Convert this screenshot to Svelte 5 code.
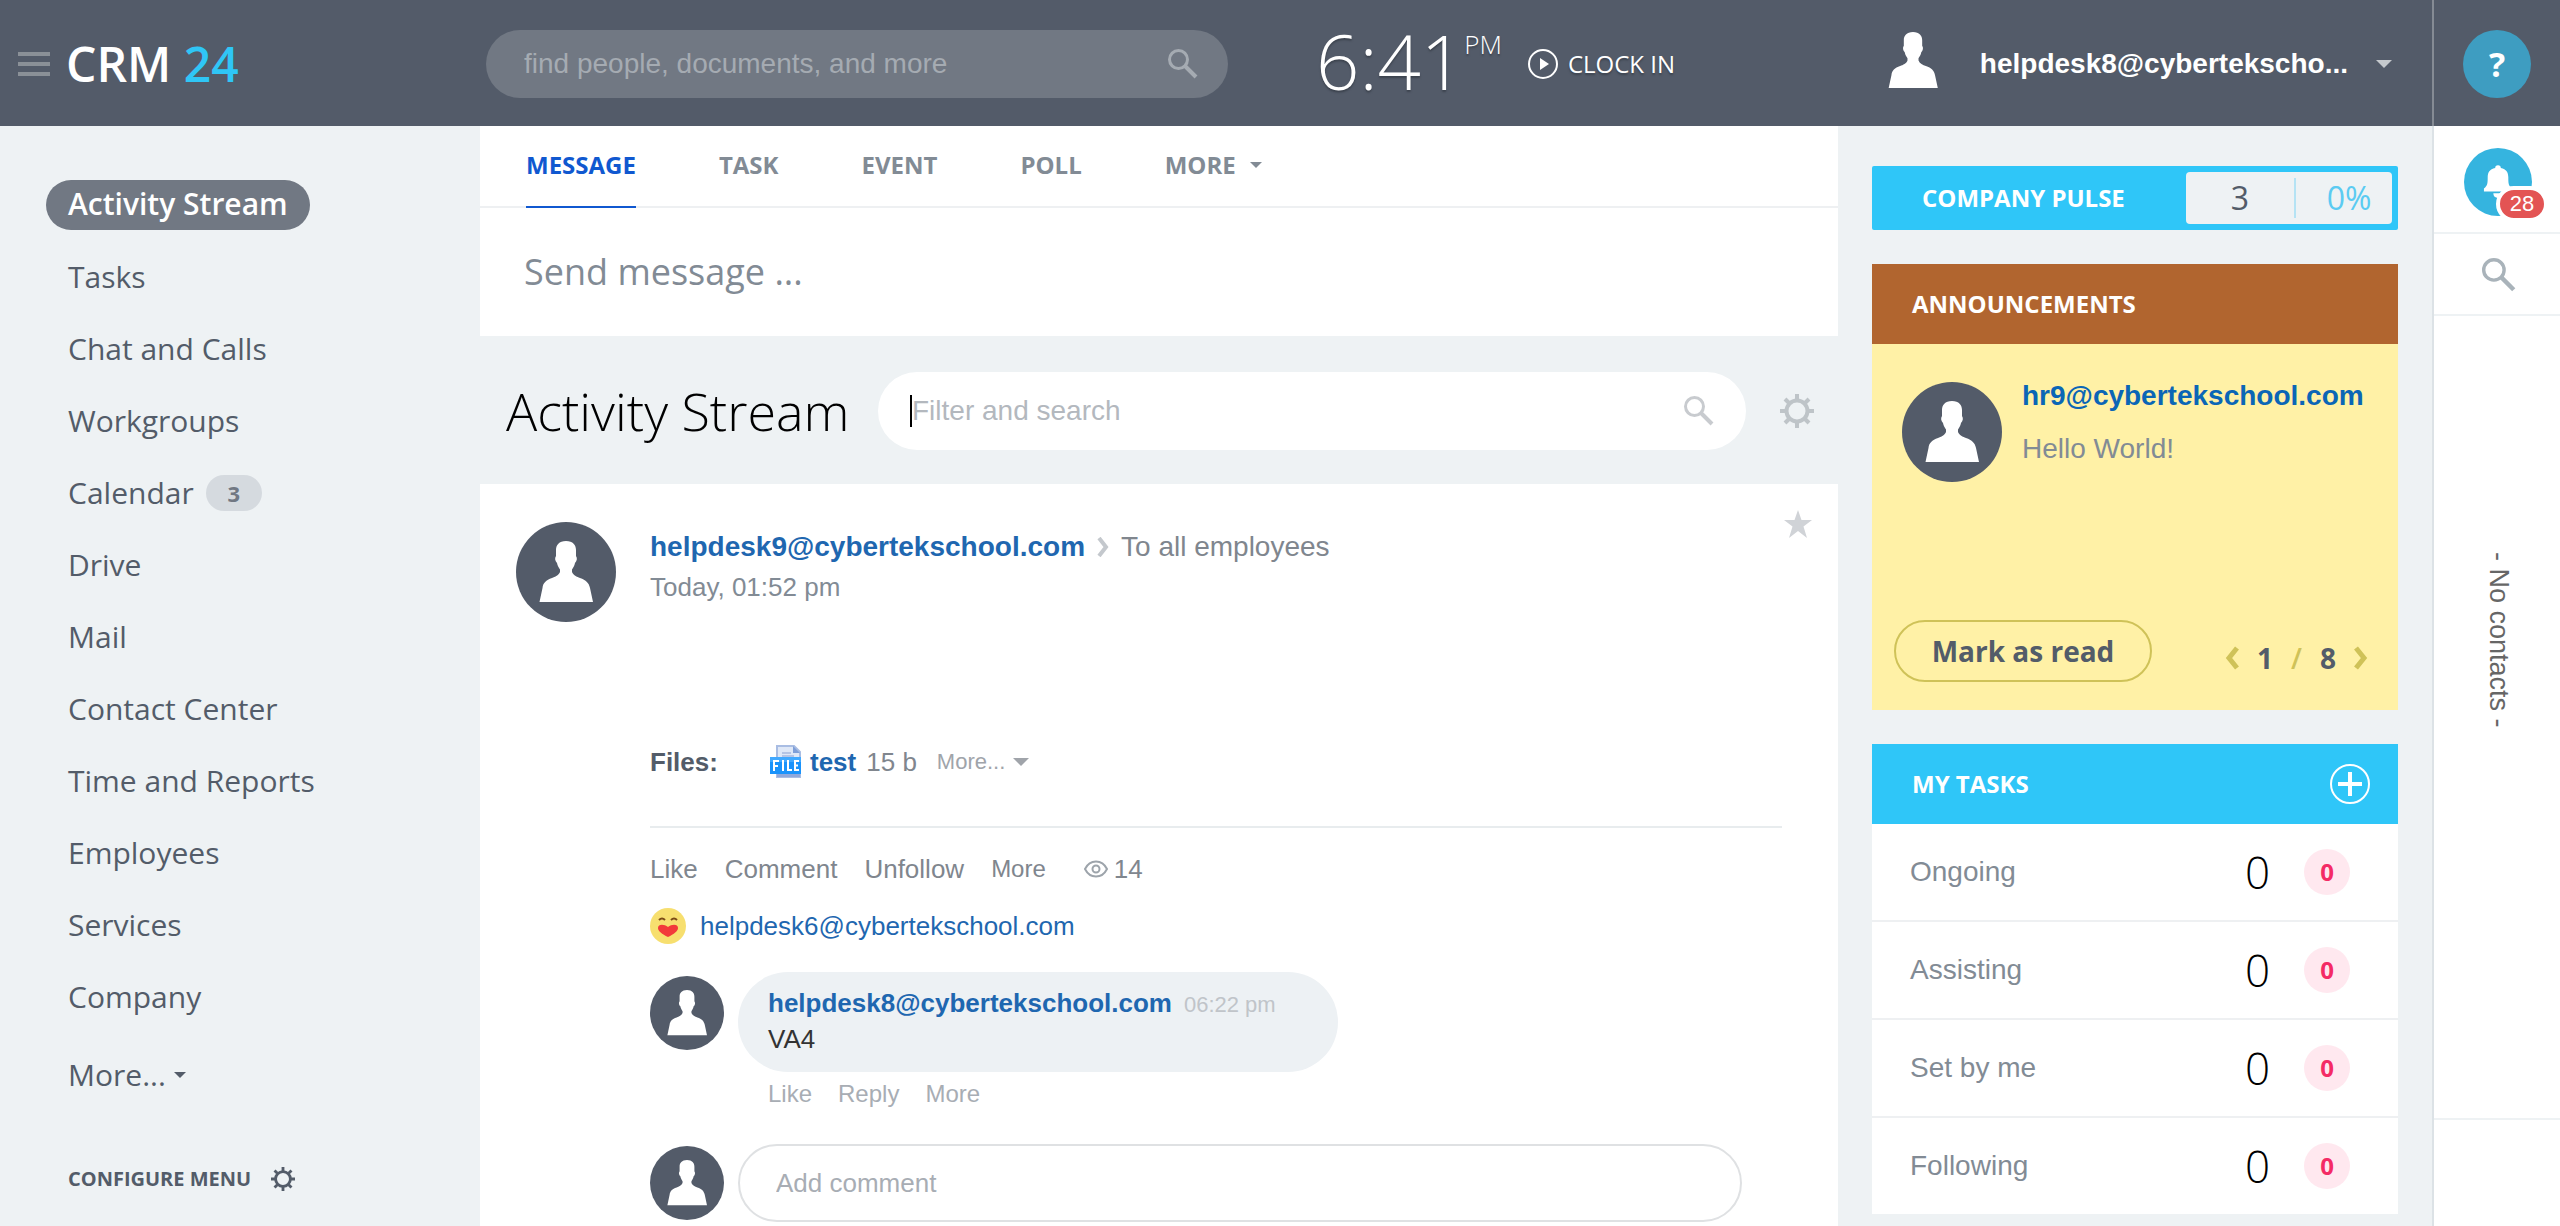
<script>
  const menu = ['Tasks', 'Chat and Calls', 'Workgroups', 'Calendar', 'Drive', 'Mail', 'Contact Center', 'Time and Reports', 'Employees', 'Services', 'Company'];
  const tabs = ['MESSAGE', 'TASK', 'EVENT', 'POLL'];
  const tasks = ['Ongoing', 'Assisting', 'Set by me', 'Following'];
</script>

{#snippet person(box)}
  <svg class="person" viewBox={box} aria-hidden="true">
    <path d="M50 19C57 19 60 23 60 28V34C61.500 36 61 39 59 41C58.500 44 57 46 56 47.500V50C57 53 61 55 64 56C70 58 73 61 74 66L77 80H23.500L26.500 66C27 61 30 58 36 56C39 55 43 53 44 50V47.500C43 46 41.500 44 41 41C39 39 38.500 36 40 34V28C40 23 43 19 50 19Z" />
  </svg>
{/snippet}

{#snippet search()}
  <svg class="search-icon" viewBox="0 0 30 30" aria-hidden="true">
    <circle cx="10.500" cy="10.500" r="9" /><path d="M17 17 28 28" stroke-width="4" />
  </svg>
{/snippet}

{#snippet gear()}
  <svg class="gear" viewBox="0 0 34 34" aria-hidden="true">
    <circle cx="17" cy="17" r="10.500" fill="none" stroke-width="4" />
    <path d="M17 0v6M17 28v6M0 17h6M28 17h6M5 5l4 4M25 25l4 4M29 5l-4 4M9 25l-4 4" stroke-width="4" />
  </svg>
{/snippet}

<div class="page">
  <header>
    <div class="brand">
      <button class="burger" aria-label="Toggle menu"><i></i><i></i><i></i></button>
      <a class="logo" href="#home">CRM <span>24</span></a>
    </div>
    <div class="head-main">
      <label class="find">
        <input type="text" placeholder="find people, documents, and more" aria-label="Find" />
        {@render search()}
      </label>
      <div class="clock"><span class="time">6:41</span><span class="pm">PM</span></div>
      <button class="clockin">
        <svg viewBox="0 0 30 30" aria-hidden="true"><circle cx="15" cy="15" r="14" /><path d="M12 9v12l9-6z" /></svg>
        CLOCK IN
      </button>
    </div>
    <button class="user">
      {@render person('23 19 54 61')}
      <b>helpdesk8@cybertekscho...</b>
      <i class="caret"></i>
    </button>
    <div class="help-cell"><button class="help">?</button></div>
  </header>

  <div class="body">
    <nav>
      <a class="active" href="#stream">Activity Stream</a>
      {#each menu as item}
        <a href="#menu">{item}{#if item === 'Calendar'}<em>3</em>{/if}</a>
      {/each}
      <a class="more" href="#more">More...<i class="caret small"></i></a>
      <a class="configure" href="#configure">CONFIGURE MENU {@render gear()}</a>
    </nav>

    <main>
      <section class="composer">
        <div class="tabs">
          {#each tabs as tab, i}<button class:on={i === 0}>{tab}</button>{/each}
          <button>MORE<i class="caret small"></i></button>
        </div>
        <button class="send">Send message ...</button>
      </section>

      <div class="title">
        <h1>Activity Stream</h1>
        <label class="filter">
          <i class="cursor"></i>
          <input type="text" placeholder="Filter and search" aria-label="Filter and search" />
          {@render search()}
        </label>
        <button class="settings" aria-label="Settings">{@render gear()}</button>
      </div>

      <article>
        <div class="avatar large">{@render person('0 0 100 100')}</div>
        <div class="post">
          <div class="post-head">
            <div class="who">
              <a href="#u9"><b>helpdesk9@cybertekschool.com</b></a>
              <svg viewBox="0 0 12 20" aria-hidden="true"><path d="M2 1l7 9-7 9" /></svg>
              <span>To all employees</span>
            </div>
            <button class="star" aria-label="Favorite"><svg viewBox="0 0 28 28"><path d="M14 0l3.500 10H28l-8.500 6.500L23 28l-9-7-9 7 3.500-11.500L0 10h10.500z" /></svg></button>
          </div>
          <div class="when">Today, 01:52 pm</div>

          <div class="files">
            <b>Files:</b>
            <svg class="file" viewBox="0 0 32 34" aria-hidden="true">
              <path d="M7 1h17l6 6v25H7z" fill="#dfe8f7" stroke="#a9bde3" stroke-width="2" />
              <path d="M23 1v7h7z" fill="#7f9fd8" />
              <path d="M12 8h9M12 11h12" stroke="#b5c4e4" stroke-width="2" />
              <path d="M7 29h23v3H7z" fill="#8fa8dc" />
              <rect y="12" width="31" height="17" fill="#1a93fb" />
              <path d="M0 12h31v5H0z" fill="#41a9ff" />
              <path d="M4 26V16h5M4 21h4M13 15v11M18 15v10h4M29 16h-4v9h4M25 20.500h3" fill="none" stroke="#fff" stroke-width="2" />
            </svg>
            <a href="#test"><b>test</b></a>
            <span>15 b</span>
            <button>More...<i class="caret"></i></button>
          </div>

          <div class="actions">
            <button>Like</button><button>Comment</button><button>Unfollow</button><button class="less">More</button>
            <span class="views">
              <svg viewBox="0 0 24 18" aria-hidden="true"><path d="M1 9c5-10 17-10 22 0-5 10-17 10-22 0z" /><circle cx="12" cy="9" r="3.500" /></svg>14
            </span>
          </div>

          <div class="reaction">
            <svg viewBox="0 0 36 36" aria-hidden="true">
              <circle cx="18" cy="18" r="18" fill="#f7df6f" />
              <path d="M9 12q3-3 6 0M21 12q3-3 6 0" fill="none" stroke="#7b4b16" stroke-width="2" />
              <path d="M18 29c-6-3-10-6-10-9 0-4 6-4 10-1 4-3 10-3 10 1 0 3-4 6-10 9z" fill="#f23a3a" />
            </svg>
            <a href="#u6">helpdesk6@cybertekschool.com</a>
          </div>

          <div class="comment">
            <div class="avatar">{@render person('0 0 100 100')}</div>
            <div>
              <div class="bubble">
                <div><a href="#u8"><b>helpdesk8@cybertekschool.com</b></a><time>06:22 pm</time></div>
                <p>VA4</p>
              </div>
              <div class="sub"><button>Like</button><button>Reply</button><button>More</button></div>
            </div>
          </div>

          <div class="add">
            <div class="avatar">{@render person('0 0 100 100')}</div>
            <input type="text" placeholder="Add comment" aria-label="Add comment" />
          </div>
        </div>
      </article>
    </main>

    <aside>
      <section class="pulse">
        <h2>COMPANY PULSE</h2>
        <div><span>3</span><span class="pct">0%</span></div>
      </section>

      <section class="announce">
        <h2>ANNOUNCEMENTS</h2>
        <div class="note">
          <div class="note-top">
            <div class="avatar large">{@render person('0 0 100 100')}</div>
            <div>
              <a href="#hr9"><b>hr9@cybertekschool.com</b></a>
              <p>Hello World!</p>
            </div>
          </div>
          <div class="note-foot">
            <button class="mark">Mark as read</button>
            <div class="pager">
              <button aria-label="Previous"><svg viewBox="0 0 14 24"><path d="M12 2L4 12l8 10" /></svg></button>
              <span>1</span><i>/</i><span>8</span>
              <button aria-label="Next"><svg viewBox="0 0 14 24"><path d="M2 2l8 10-8 10" /></svg></button>
            </div>
          </div>
        </div>
      </section>

      <section class="tasks">
        <div class="tasks-head">
          <h2>MY TASKS</h2>
          <button aria-label="Add task"><svg viewBox="0 0 40 40"><circle cx="20" cy="20" r="19" stroke-width="2" /><path d="M20 8v24M8 20h24" stroke-width="4" /></svg></button>
        </div>
        {#each tasks as task}
          <a class="task" href="#task"><span>{task}</span><strong>0</strong><em>0</em></a>
        {/each}
      </section>
    </aside>

    <div class="rail">
      <div class="bell-cell">
        <button class="bell" aria-label="Notifications">
          <svg viewBox="0 0 32 36" aria-hidden="true"><path d="M16 0c2 0 3 1 3 3 6 1 8 5 8 10 0 6 0 9 4 12v3H1v-3c4-3 4-6 4-12C5 8 7 4 13 3c0-2 1-3 3-3zM11 30h10c0 3-2 5-5 5s-5-2-5-5z" /></svg>
          <span>28</span>
        </button>
      </div>
      <button class="rail-search" aria-label="Search">{@render search()}</button>
      <div class="contacts"><span>- No contacts -</span></div>
      <div class="rail-end"></div>
    </div>
  </div>
</div>

<style>
  :global(body) { margin: 0; background: #eef2f4; overflow: hidden; }
  .page { height: 100vh; display: flex; flex-direction: column; font: 26px/32px "Liberation Sans", Arial, sans-serif; color: #535c69; overflow: hidden; }
  .page * { box-sizing: border-box; }
  button { border: 0; background: none; padding: 0; margin: 0; font: inherit; color: inherit; cursor: pointer; }
  a { color: #1f67b0; text-decoration: none; }
  p, h1, h2 { margin: 0; }
  input { border: 0; outline: 0; background: none; padding: 0; font: inherit; min-width: 0; flex: 1; }
  svg { display: block; flex: none; }
  .caret { display: inline-block; flex: none; border: 8px solid transparent; border-top-color: currentColor; border-bottom: 0; }
  .caret.small { border-width: 6px; border-bottom: 0; }
  .search-icon { width: 30px; height: 30px; fill: none; stroke: currentColor; stroke-width: 3; }
  .gear { width: 34px; height: 34px; stroke: currentColor; }

  header { flex: none; height: 126px; background: #535b69; display: flex; align-items: center; color: #fff; }
  .brand { width: 480px; flex: none; display: flex; align-items: center; padding: 2px 0 0 18px; gap: 16px; }
  .burger { display: flex; flex-direction: column; gap: 6px; }
  .burger i { width: 32px; height: 4px; background: #8a9097; }
  .logo { font: 600 48px/64px "Open Sans", sans-serif; color: #fff; }
  .logo span { color: #2fc6f6; }
  .head-main { flex: 1; display: flex; align-items: center; padding: 2px 0 0 6px; }
  .find { width: 742px; height: 68px; border-radius: 34px; background: #717883; color: #a5abb2; display: flex; align-items: center; padding: 0 30px 0 38px; font-size: 28px; }
  .find input::placeholder { color: #a5abb2; opacity: 1; }
  .clock { display: flex; align-items: flex-start; margin-left: 88px; font-family: "Open Sans", sans-serif; font-weight: 300; text-shadow: 0 2px 2px #3c434e; }
  .time { font-size: 76px; line-height: 118px; height: 124px; }
  .pm { font-size: 26px; line-height: 32px; padding-top: 26px; }
  .clockin { display: flex; align-items: center; gap: 10px; margin-left: 26px; font-family: "Open Sans", sans-serif; font-size: 24px; text-shadow: 0 2px 2px #3c434e; }
  .clockin svg { width: 30px; height: 30px; fill: #fff; }
  .clockin circle { fill: none; stroke: #fff; stroke-width: 2; }
  .user { display: flex; align-items: center; margin-right: 40px; font-size: 28px; padding-top: 2px; }
  .user .person { width: 50px; height: 56px; margin: 0 42px 8px 0; }
  .user .caret { margin-left: 28px; color: #c5c9cd; }
  .help-cell { width: 128px; height: 126px; padding-top: 2px; border-left: 2px solid #858b94; display: flex; align-items: center; justify-content: center; }
  .help { width: 68px; height: 68px; border-radius: 50%; background: #3e9dc1; font: 700 34px/68px "Open Sans", sans-serif; }

  .body { flex: 1; min-height: 0; display: flex; }
  nav { width: 480px; flex: none; padding: 54px 46px 0; display: flex; flex-direction: column; align-items: flex-start; font-family: "Open Sans", sans-serif; font-size: 30px; }
  nav a { color: #535c69; height: 50px; line-height: 50px; margin-bottom: 22px; padding: 0 22px; display: flex; align-items: center; }
  nav a.active { color: #fff; background: #717883; border-radius: 25px; font-weight: 600; line-height: 48px; align-items: flex-start; }
  nav em { font: 700 22px/36px "Open Sans", sans-serif; width: 56px; height: 36px; border-radius: 18px; background: #d5dadf; color: #717883; text-align: center; margin-left: 12px; }
  nav .more { margin-top: 6px; margin-bottom: 54px; }
  nav .more i { margin-left: 8px; }
  nav .configure { font-size: 20px; font-weight: 700; gap: 20px; }
  .configure .gear { width: 24px; height: 24px; }

  main { flex: 1; min-width: 0; }
  .composer { background: #fff; height: 210px; }
  .tabs { height: 82px; border-bottom: 2px solid #eef0f2; display: flex; gap: 83px; padding-left: 46px; font: 700 24px/32px "Open Sans", sans-serif; color: #828b95; }
  .tabs button { height: 82px; padding-bottom: 2px; border-bottom: 2px solid transparent; display: flex; align-items: center; }
  .tabs .on { color: #1058d0; border-color: #1058d0; }
  .tabs i { margin-left: 14px; }
  .send { font: 36px/48px "Open Sans", sans-serif; color: #828b95; padding: 40px 44px; }
  .title { height: 148px; display: flex; align-items: center; padding: 2px 24px 0 26px; }
  h1 { font: 300 52px/70px "Open Sans", sans-serif; color: #000; width: 372px; flex: none; white-space: nowrap; }
  .filter { flex: 1; height: 78px; border-radius: 39px; background: #fff; display: flex; align-items: center; padding: 0 32px; color: #c8cbcf; font-size: 28px; }
  .filter input::placeholder { color: #b3b8be; opacity: 1; }
  .cursor { width: 2px; height: 32px; background: #000; }
  .settings { margin-left: 34px; color: #bec4c8; }

  article { background: #fff; min-height: 1000px; display: flex; padding: 38px 26px 0 36px; gap: 34px; }
  .avatar { width: 74px; height: 74px; border-radius: 50%; background: #535b69; flex: none; }
  .avatar.large { width: 100px; height: 100px; }
  .person { width: 100%; height: 100%; fill: #fff; }
  .post { flex: 1; min-width: 0; }
  .post-head { display: flex; justify-content: space-between; height: 44px; }
  .who { display: flex; align-items: center; font-size: 28px; padding-top: 6px; }
  .who svg { width: 12px; height: 20px; margin: 0 12px; fill: none; stroke: #c4c8cd; stroke-width: 4; }
  .who span { color: #80868e; }
  .star { width: 28px; height: 28px; margin-top: -12px; fill: #d0d3d7; }
  .when { color: #828b95; line-height: 42px; }
  .files { display: flex; align-items: center; height: 220px; margin-right: 30px; padding: 122px 0 32px; border-bottom: 2px solid #e8ecee; color: #80868e; }
  .files > b { width: 120px; color: #535c69; }
  .file { width: 32px; height: 34px; margin-right: 8px; }
  .files span { margin-left: 10px; }
  .files button { margin-left: 20px; font-size: 22px; color: #a0a4aa; display: flex; align-items: center; gap: 8px; }
  .actions { display: flex; align-items: center; gap: 27px; height: 82px; color: #80868e; }
  .less { font-size: 24px; }
  .views { display: flex; align-items: center; gap: 6px; margin-left: 11px; }
  .views svg { width: 24px; height: 18px; fill: none; stroke: #9da4ab; stroke-width: 2; }
  .reaction { display: flex; align-items: center; gap: 14px; height: 32px; }
  .reaction svg { width: 36px; height: 36px; }
  .comment { display: flex; gap: 14px; margin-top: 30px; }
  .comment .avatar { margin-top: 4px; }
  .bubble { width: 600px; height: 100px; border-radius: 50px; background: #edf1f4; padding: 14px 30px; line-height: 34px; }
  .bubble time { margin-left: 12px; font-size: 22px; color: #c0c4c9; }
  .bubble p { color: #333; }
  .sub { display: flex; gap: 26px; padding: 6px 30px; font-size: 24px; color: #a8adb4; }
  .add { display: flex; align-items: center; gap: 14px; margin: 28px 70px 0 0; }
  .add input { height: 78px; border: 2px solid #dfe1e3; border-radius: 39px; padding: 0 36px; }
  .add input::placeholder { color: #a8adb4; opacity: 1; }

  aside { width: 594px; flex: none; padding: 40px 34px 0; display: flex; flex-direction: column; gap: 34px; }
  aside section { flex: none; }
  h2 { font: 700 24px/32px "Open Sans", sans-serif; color: #fff; }
  .pulse { height: 64px; background: #2fc6f8; border-radius: 2px; display: flex; align-items: center; justify-content: space-between; padding: 0 6px 0 50px; }
  .pulse div { width: 206px; height: 52px; border-radius: 4px; background: #eef2f4; display: grid; grid-template-columns: 108px 1fr; align-items: center; font: 32px/40px "Open Sans", sans-serif; }
  .pulse span { text-align: center; }
  .pulse .pct { border-left: 2px solid #b5e3f4; color: #5bcbf2; padding-left: 10px; }
  .announce h2 { background: #b1652f; padding: 24px 40px; }
  .note { background: #fff1a6; height: 366px; padding: 38px 22px 28px; display: flex; flex-direction: column; justify-content: space-between; }
  .note-top { display: flex; gap: 20px; padding-left: 8px; }
  .note-top b { font-size: 28px; line-height: 28px; }
  .note-top a { color: #0b66b6; display: block; height: 54px; line-height: 26px; }
  .note-top p { color: #828b95; font-size: 28px; line-height: 26px; }
  .note-foot { display: flex; justify-content: space-between; font: 700 28px/40px "Open Sans", sans-serif; }
  .mark { width: 258px; height: 62px; border: 2px solid #cfc258; border-radius: 31px; }
  .pager { display: flex; align-items: center; gap: 18px; padding: 14px 8px 0 0; }
  .pager i { color: #cfc258; font-style: normal; font-weight: 600; }
  .pager svg { width: 14px; height: 24px; fill: none; stroke: #cfc258; stroke-width: 5; }
  .tasks-head { background: #2fc6f8; height: 80px; display: flex; align-items: center; justify-content: space-between; padding: 0 28px 0 40px; }
  .tasks-head svg { width: 40px; height: 40px; fill: none; stroke: #fff; }
  .task { height: 98px; background: #fff; border-bottom: 2px solid #eef0f2; display: flex; align-items: center; padding: 0 48px 0 38px; font-size: 28px; color: #828b95; }
  .task:last-child { height: 96px; border: 0; }
  .task span { flex: 1; }
  .task strong { font: 300 44px/60px "Open Sans", sans-serif; color: #000; margin-right: 34px; }
  .task em { width: 46px; height: 46px; border-radius: 23px; background: #ffe8ef; color: #f42b65; font: 700 24px/46px "Open Sans", sans-serif; text-align: center; }

  .rail { width: 128px; flex: none; background: #fff; border-left: 2px solid #dce2e6; display: flex; flex-direction: column; }
  .bell-cell { height: 108px; border-bottom: 2px solid #eef2f4; padding: 22px 30px; flex: none; }
  .bell { position: relative; width: 68px; height: 68px; border-radius: 50%; background: #35b4df; display: flex; align-items: center; justify-content: center; }
  .bell svg { width: 30px; height: 34px; fill: #fff; }
  .bell span { position: absolute; right: -16px; bottom: -6px; min-width: 52px; height: 36px; border: 4px solid #fff; border-radius: 18px; background: #e35454; color: #fff; font-size: 22px; line-height: 28px; }
  .rail-search { height: 82px; flex: none; padding: 2px 0 0 4px; border-bottom: 2px solid #eef2f4; display: flex; align-items: center; justify-content: center; color: #a9b3ba; }
  .rail-search .search-icon { width: 34px; height: 34px; }
  .contacts { flex: 1; display: flex; justify-content: center; padding: 236px 0 0 4px; color: #666; font-size: 27px; }
  .contacts span { writing-mode: vertical-rl; }
  .rail-end { height: 108px; border-top: 2px solid #eef2f4; flex: none; }
</style>
